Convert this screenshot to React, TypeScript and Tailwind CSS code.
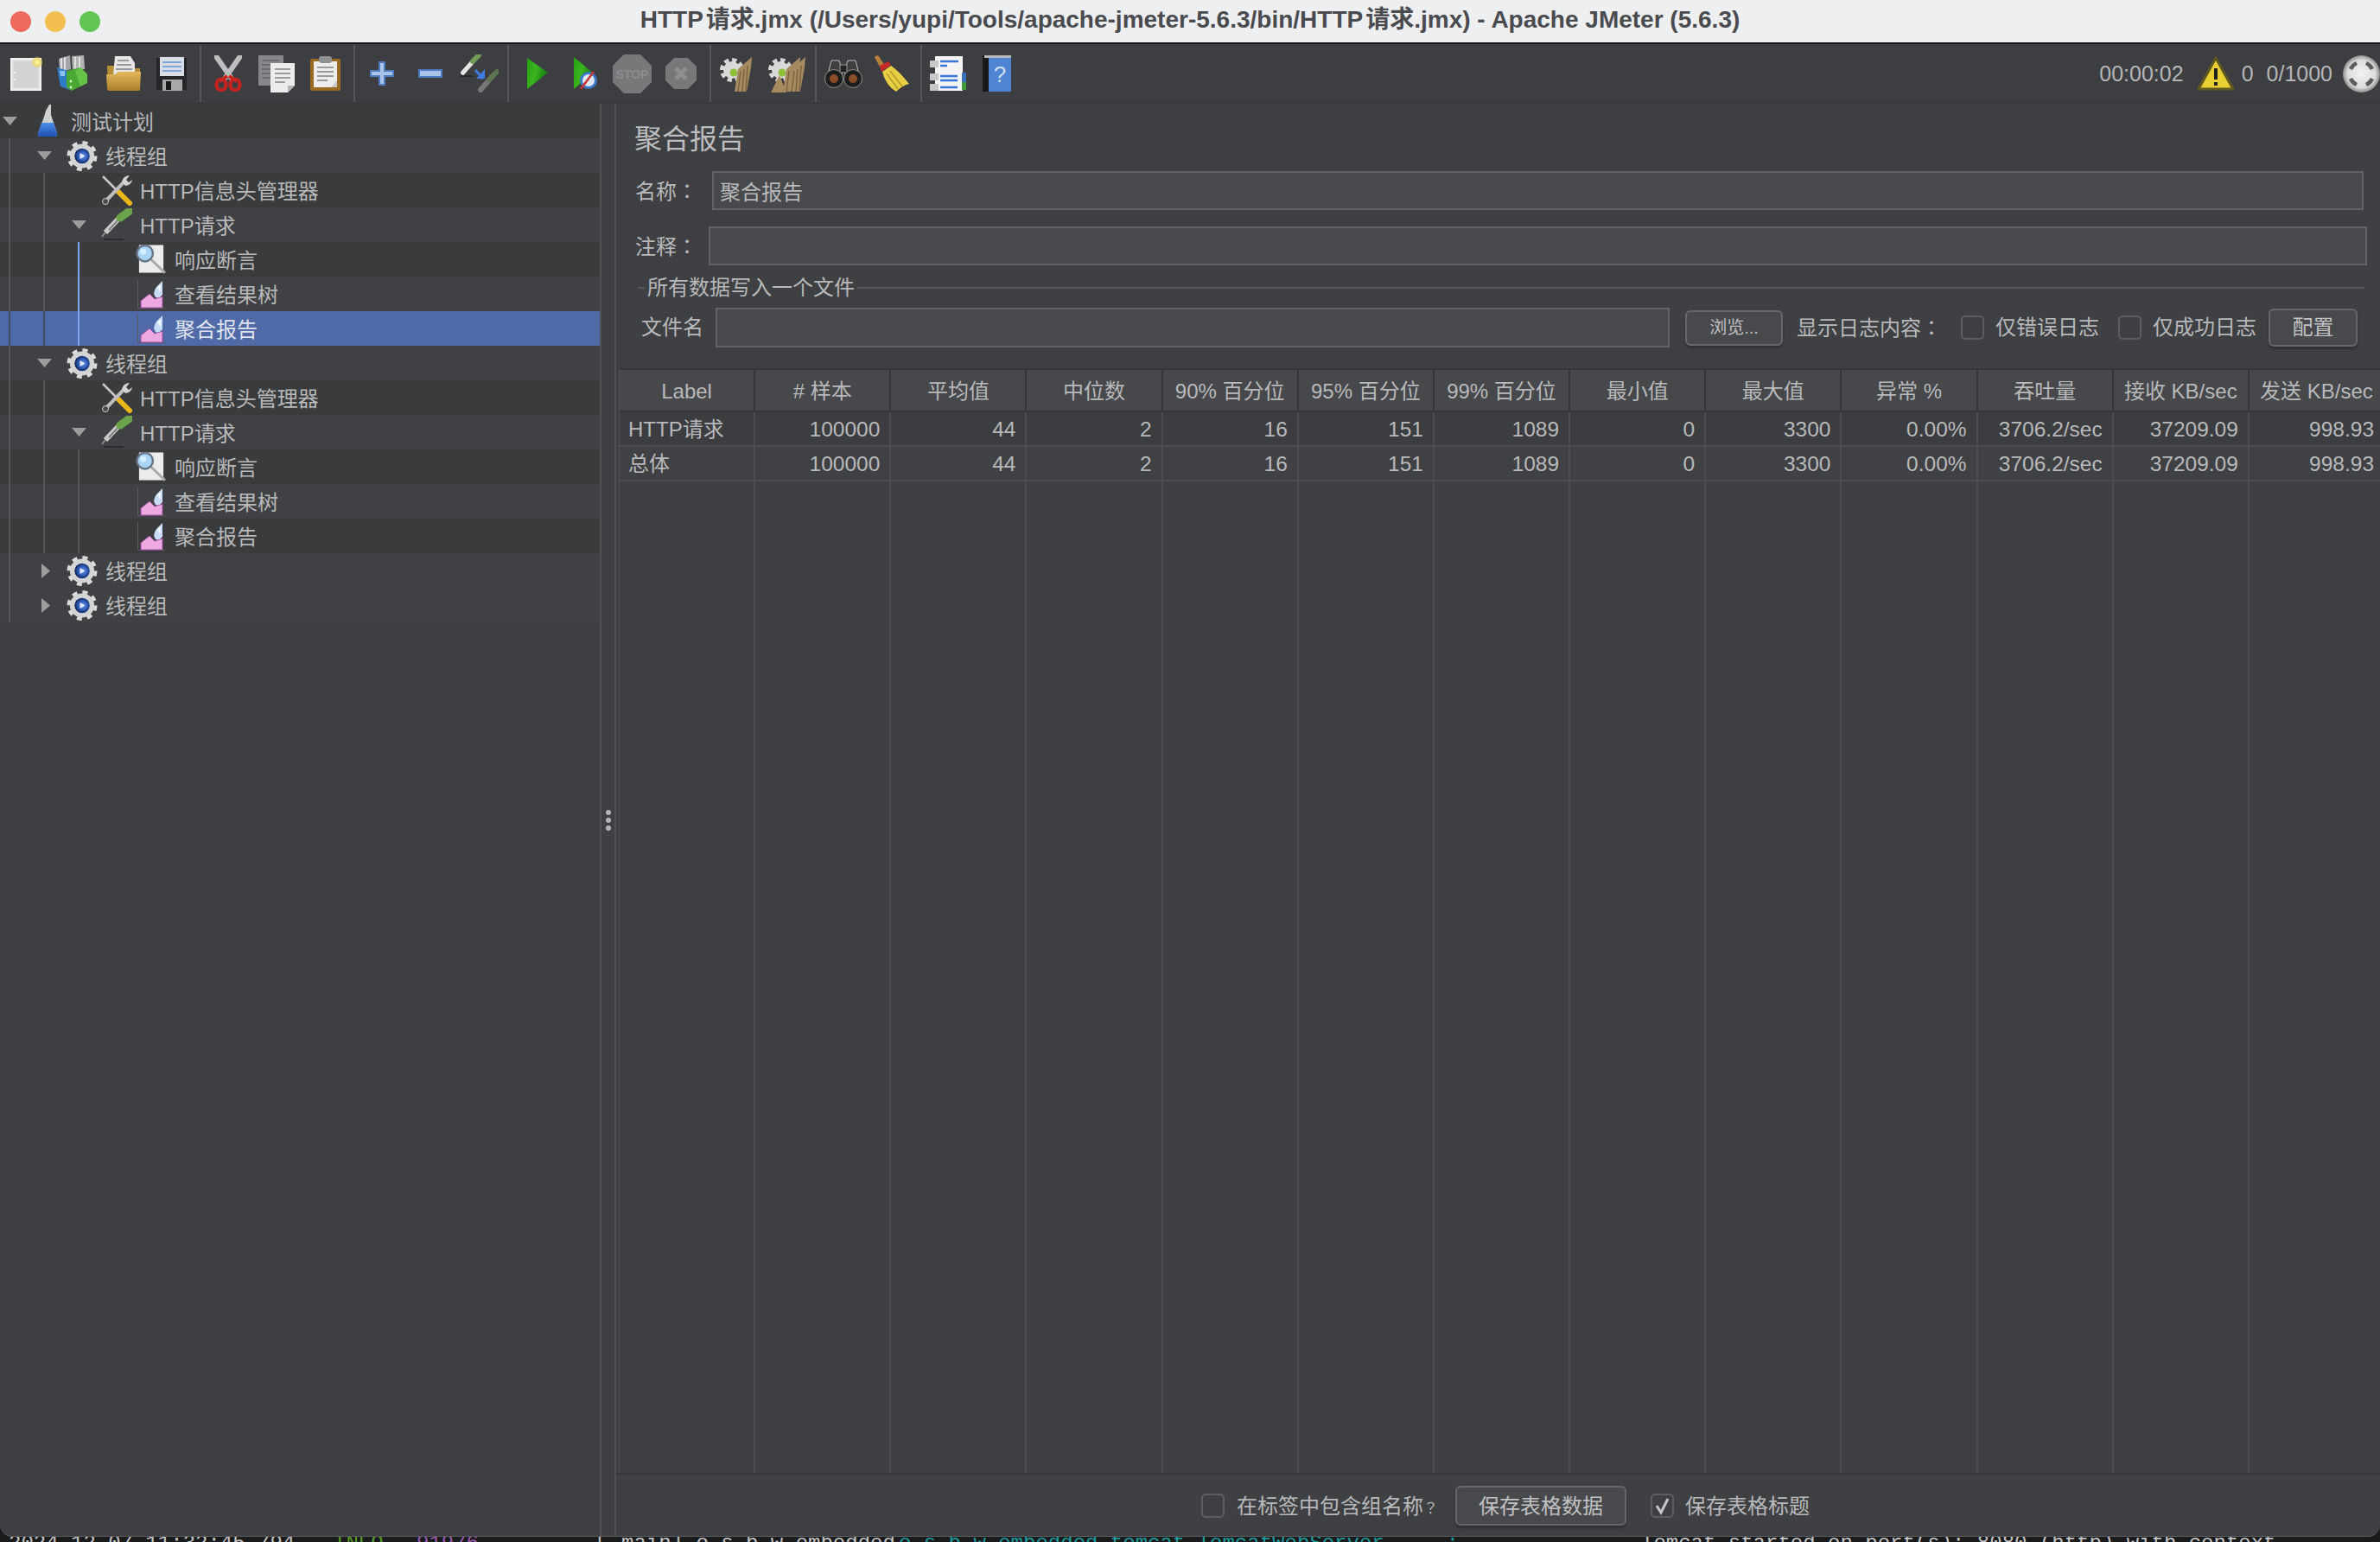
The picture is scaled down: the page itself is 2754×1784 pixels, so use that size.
import React from "react";

const Colon = ({ small }: { small?: boolean }) => (
  <span lang="zh-TW" className={`font-['Noto_Sans_CJK_TC',sans-serif] ${small ? "text-[17px]" : ""}`}>{small ? "？" : "："}</span>
);

/* ---------- toolbar icons ---------- */
const Sep = ({ c }: { c: string }) => <div className={`h-[66px] w-[2px] bg-[#56575a] ${c}`} />;

const NewIcon = ({ c }: { c: string }) => (
  <svg className={c} width="37" height="40" viewBox="0 0 37 40">
    <defs><radialGradient id="glow"><stop offset="0" stopColor="#fff7b0" /><stop offset="0.55" stopColor="#f0de70" /><stop offset="1" stopColor="#d8c85a" stopOpacity="0" /></radialGradient></defs>
    <rect x="1" y="3" width="34" height="36" fill="#dfdfdf" stroke="#f2f2f2" strokeWidth="2" />
    <rect x="4" y="6" width="28" height="30" fill="#d4d4d4" />
    <circle cx="31" cy="7" r="7" fill="url(#glow)" />
    <circle cx="5" cy="19" r="1" fill="#fff" /><circle cx="5" cy="27" r="1" fill="#fff" />
  </svg>
);
const TemplateIcon = ({ c }: { c: string }) => (
  <svg className={c} width="38" height="42" viewBox="0 0 38 42">
    <path d="M3 4 L16 0 L17 16 L4 20Z" fill="#a4a6a9" /><path d="M18 1 L32 0 L33 16 L19 17Z" fill="#b2b3b5" />
    <path d="M6 3v15M10 2v15M22 2v14M27 2v14" stroke="#e0e0e0" strokeWidth="2" />
    <path d="M1 14 L14 18 L16 40 L5 36Z" fill="#2f7cc6" />
    <path d="M4 18h6v6H5z" fill="#8cc3ee" />
    <path d="M12 18 L28 14 L36 22 L36 32 L18 41 L12 37Z" fill="#49a832" />
    <path d="M22 18 L28 14 L36 22 L36 32 L28 36Z" fill="#67c346" />
    <circle cx="17" cy="30" r="1.4" fill="#d8f5c8" /><circle cx="17" cy="37" r="1.4" fill="#d8f5c8" />
  </svg>
);
const OpenIcon = ({ c }: { c: string }) => (
  <svg className={c} width="40" height="42" viewBox="0 0 40 42">
    <defs><linearGradient id="fold" x1="0" y1="0" x2="0" y2="1"><stop offset="0" stopColor="#e5b95a" /><stop offset="1" stopColor="#a97f2c" /></linearGradient></defs>
    <path d="M1 12h8l2 3h28v24H2z" fill="#b78d36" />
    <path d="M10 1h18l5 8v14H8z" fill="#e6e6e6" />
    <path d="M13 6h13M12 11h17M11 16h19" stroke="#9a9a9a" strokeWidth="2" />
    <path d="M0 22h10l4-3h26l-1 21q0 1-2 1H3q-2 0-2-2z" fill="url(#fold)" />
  </svg>
);
const SaveIcon = ({ c }: { c: string }) => (
  <svg className={c} width="39" height="41" viewBox="0 0 39 41">
    <path d="M1 1h37v39H1z" fill="#25262a" stroke="#4a4b4f" />
    <rect x="6" y="1" width="28" height="22" fill="#d8dde6" />
    <path d="M9 7h22M9 12h22M9 17h22" stroke="#7ea6d8" strokeWidth="2" />
    <rect x="9" y="27" width="23" height="13" fill="#a8a8a8" />
    <rect x="13" y="29" width="6" height="10" fill="#18181a" />
  </svg>
);
const CutIcon = ({ c }: { c: string }) => (
  <svg className={c} width="32" height="42" viewBox="0 0 32 42">
    <path d="M2 1 L20 27 M30 1 L12 27" stroke="#bdbec0" strokeWidth="6" strokeLinecap="round" />
    <path d="M17 24 L26 30 M15 24 L6 30" stroke="#c62320" strokeWidth="4" />
    <ellipse cx="8" cy="34" rx="5.5" ry="6.5" fill="none" stroke="#c62320" strokeWidth="4" />
    <ellipse cx="24" cy="34" rx="5.5" ry="6.5" fill="none" stroke="#c62320" strokeWidth="4" />
  </svg>
);
const CopyIcon = ({ c }: { c: string }) => (
  <svg className={c} width="43" height="43" viewBox="0 0 43 43">
    <rect x="0" y="0" width="29" height="35" fill="#86878a" />
    <path d="M4 6h20M4 11h20M4 16h20M4 21h20M4 26h20" stroke="#6b6c6e" strokeWidth="2" />
    <path d="M14 9h28v26l-8 8H14z" fill="#ececec" />
    <path d="M34 43v-8h8z" fill="#b5b5b5" />
    <path d="M19 16h18M19 21h18M19 26h18M19 31h12" stroke="#9d9d9d" strokeWidth="2" />
  </svg>
);
const PasteIcon = ({ c }: { c: string }) => (
  <svg className={c} width="36" height="42" viewBox="0 0 36 42">
    <rect x="0" y="4" width="35" height="37" rx="2" fill="#9a6a20" />
    <rect x="4" y="7" width="27" height="30" fill="#ededed" />
    <path d="M24 37l7-8v8z" fill="#c8c8c8" />
    <rect x="10" y="1" width="15" height="8" rx="3" fill="#8f9092" />
    <path d="M8 14h19M8 19h19M8 24h19M8 29h12" stroke="#9a9a9a" strokeWidth="2" />
  </svg>
);
const PlusIcon = ({ c }: { c: string }) => (
  <svg className={c} width="28" height="28" viewBox="0 0 28 28">
    <path d="M11 1h6v10h10v6H17v10h-6V17H1v-6h10z" fill="#a9c3ea" stroke="#4f7cc0" strokeWidth="2" />
  </svg>
);
const MinusIcon = ({ c }: { c: string }) => (
  <svg className={c} width="28" height="10" viewBox="0 0 28 10"><rect x="1" y="1" width="26" height="8" fill="#a9c3ea" stroke="#4f7cc0" strokeWidth="2" /></svg>
);
const ToggleIcon = ({ c }: { c: string }) => (
  <svg className={c} width="44" height="44" viewBox="0 0 44 44">
    <path d="M1 23 L16 6" stroke="#e6e6e6" strokeWidth="5" />
    <path d="M14 8 L21 1" stroke="#6f9c55" strokeWidth="6" strokeLinecap="round" />
    <path d="M0 25h14" stroke="#26272a" strokeWidth="2" />
    <path d="M17 18 L26 28" stroke="#3f7be0" strokeWidth="3" fill="none" /><path d="M18 28h10V17z" fill="#3f7be0" />
    <path d="M23 41 L38 24" stroke="#777" strokeWidth="6" strokeLinecap="round" /><path d="M33 29 L42 20" stroke="#5e7350" strokeWidth="6" strokeLinecap="round" />
  </svg>
);
const PlayIcon = ({ c }: { c: string }) => (
  <svg className={c} width="25" height="36" viewBox="0 0 25 36">
    <defs><linearGradient id="pl" x1="0" y1="0" x2="1" y2="0.4"><stop offset="0" stopColor="#25a012" /><stop offset="0.5" stopColor="#3bb51f" /><stop offset="1" stopColor="#157c10" /></linearGradient></defs>
    <path d="M1 0 L25 17 L1 36Z" fill="url(#pl)" />
  </svg>
);
const PlayNoTimerIcon = ({ c }: { c: string }) => (
  <svg className={c} width="28" height="38" viewBox="0 0 28 38">
    <path d="M1 0 L23 18 L1 37Z" fill="url(#pl)" />
    <circle cx="18" cy="27" r="8.5" fill="#dfe8f5" stroke="#3c78c8" strokeWidth="3" />
    <path d="M9 37 L24 17" stroke="#c83232" strokeWidth="2.5" />
  </svg>
);
const StopIcon = ({ c }: { c: string }) => (
  <svg className={c} width="45" height="45" viewBox="0 0 45 45">
    <path d="M13 0h19l13 13v19L32 45H13L0 32V13z" fill="#77787a" />
    <text x="22.5" y="28" textAnchor="middle" fontSize="14" fontWeight="700" fontFamily="Liberation Sans" fill="#8b8c8e">STOP</text>
  </svg>
);
const ShutIcon = ({ c }: { c: string }) => (
  <svg className={c} width="36" height="36" viewBox="0 0 36 36">
    <path d="M10 0h16l10 10v16L26 36H10L0 26V10z" fill="#77787a" />
    <path d="M12 12l12 12M24 12L12 24" stroke="#8e8f91" strokeWidth="5" />
  </svg>
);
const Broom = () => (
  <>
    <path d="M18 40 L22 14 L38 0 L37 12 L32 40Z" fill="#a68a60" />
    <path d="M22 40 L25 16M27 40 L29 14M31 40L33 10" stroke="#7c6440" strokeWidth="1.5" />
  </>
);
const ClearIcon = ({ c, all }: { c: string; all?: boolean }) => (
  <svg className={c} width={all ? 44 : 40} height="44" viewBox={all ? "0 0 44 44" : "0 0 40 44"}>
    <circle cx="15" cy="18" r="11" fill="none" stroke="#d6d6d6" strokeWidth="6" strokeDasharray="5 3.6" />
    <circle cx="15" cy="18" r="10" fill="#d9d9d9" />
    <circle cx="17" cy="21" r="4.5" fill="#8ec13a" />
    <g transform="translate(0 3)"><Broom /></g>
    {all && <g transform="translate(6 3)"><Broom /></g>}
    {all && <path d="M4 44 L14 24 L22 44Z" fill="#a68a60" />}
  </svg>
);
const BinocIcon = ({ c }: { c: string }) => (
  <svg className={c} width="44" height="36" viewBox="0 0 44 36">
    <path d="M8 3h9l3 10v6H4z M27 3h9l4 16H24v-6z" fill="#3e3e40" stroke="#bbb" strokeWidth="1" />
    <rect x="18" y="8" width="8" height="9" fill="#222" stroke="#999" />
    <circle cx="11" cy="24" r="10.5" fill="#1d1d1e" stroke="#8e8e8e" />
    <circle cx="33" cy="24" r="10.5" fill="#1d1d1e" stroke="#8e8e8e" />
    <circle cx="11" cy="24" r="5" fill="#8a4d25" /><circle cx="33" cy="24" r="5" fill="#8a4d25" />
  </svg>
);
const BroomIcon = ({ c }: { c: string }) => (
  <svg className={c} width="44" height="44" viewBox="0 0 44 44">
    <path d="M3 3 Q5 0 8 2 L15 13 L10 16Z" fill="#b5803c" />
    <path d="M9 13 L19 8 L22 12 L11 20Z" fill="#c8282a" />
    <path d="M12 20 L22 13 Q32 20 43 34 Q35 36 28 43 Q16 36 12 20Z" fill="#e6cf45" />
    <path d="M17 22 L30 40M21 19 L35 37" stroke="#b59a28" strokeWidth="1.5" />
  </svg>
);
const FuncIcon = ({ c }: { c: string }) => (
  <svg className={c} width="43" height="42" viewBox="0 0 43 42">
    <rect x="6" y="1" width="32" height="40" fill="#f4f4f4" />
    <rect x="37" y="20" width="5" height="11" fill="#3a6fc0" /><rect x="37" y="31" width="5" height="9" fill="#3f9a3a" />
    <path d="M12 7h21M12 12h8M12 24h20M12 29h20M12 37h20" stroke="#3a76d8" strokeWidth="2.5" />
    <rect x="0" y="6" width="10" height="8" fill="#c8c8c8" /><rect x="0" y="21" width="10" height="8" fill="#c8c8c8" /><rect x="0" y="33" width="10" height="8" fill="#c8c8c8" />
  </svg>
);
const HelpIcon = ({ c }: { c: string }) => (
  <svg className={c} width="34" height="42" viewBox="0 0 34 42">
    <rect x="0" y="0" width="33" height="42" fill="#17181a" />
    <rect x="7" y="3" width="26" height="39" fill="#4f84d2" />
    <rect x="2" y="0" width="31" height="3" fill="#b8b8b8" />
    <text x="20" y="31" textAnchor="middle" fontSize="26" fontFamily="Liberation Sans" fill="#cfe0f7">?</text>
  </svg>
);
const WarnIcon = ({ c }: { c: string }) => (
  <svg className={c} width="44" height="40" viewBox="0 0 44 40">
    <path d="M22 2 L42 38 H2Z" fill="#e9cf32" stroke="#5f5820" strokeWidth="3" strokeLinejoin="round" />
    <rect x="20" y="14" width="4" height="13" fill="#222" /><rect x="20" y="30" width="4" height="4" fill="#222" />
  </svg>
);
const HeapIcon = ({ c }: { c: string }) => (
  <svg className={c} width="43" height="43" viewBox="0 0 43 43">
    <defs><radialGradient id="hp"><stop offset="0" stopColor="#f2f2f2" /><stop offset="0.75" stopColor="#dcdcdc" /><stop offset="1" stopColor="#8d8d8d" /></radialGradient></defs>
    <circle cx="21.5" cy="21.5" r="21.5" fill="url(#hp)" />
    <g fill="none" stroke="#5c5c5e" strokeWidth="4.5">
      <path d="M9 16 A13.5 13.5 0 0 1 16 9" /><path d="M27 9 A13.5 13.5 0 0 1 34 16" />
      <path d="M34 27 A13.5 13.5 0 0 1 27 34" /><path d="M16 34 A13.5 13.5 0 0 1 9 27" />
    </g>
  </svg>
);

/* ---------- tree icons ---------- */
const Flask = () => (
  <svg width="24" height="38" viewBox="0 0 24 38">
    <defs><linearGradient id="fl" x1="0" y1="0" x2="0" y2="1"><stop offset="0" stopColor="#4f8ee8" /><stop offset="1" stopColor="#1c4fb2" /></linearGradient></defs>
    <path d="M10 7 L14 0 L16 0 L16 12 L23 33 Q24 37 20 37 H4 Q0 37 1 33 L8 14Z" fill="#cfd0d2" />
    <path d="M5 21 H19 L23 33 Q24 37 20 37 H4 Q0 37 1 33Z" fill="url(#fl)" />
  </svg>
);
const Gear = () => (
  <svg width="37" height="37" viewBox="0 0 37 37">
    <defs><radialGradient id="gr" cx="0.55" cy="0.5"><stop offset="0" stopColor="#6f9ff0" /><stop offset="0.65" stopColor="#2a55b0" /><stop offset="1" stopColor="#172b60" /></radialGradient></defs>
    <circle cx="18.5" cy="18.5" r="15.5" fill="none" stroke="#dcdcdc" strokeWidth="5" strokeDasharray="6 6.17" />
    <circle cx="18.5" cy="18.5" r="14.5" fill="#d4d4d4" />
    <circle cx="18.5" cy="18.5" r="9" fill="url(#gr)" />
    <path d="M16 15 L22 18.5 L16 22Z" fill="#e4ecfa" />
  </svg>
);
const Wrench = () => (
  <svg width="36" height="36" viewBox="0 0 36 36">
    <path d="M2 2 L20 20" stroke="#c9c9c9" strokeWidth="2.5" />
    <path d="M20 20 L33 33" stroke="#e9b61a" strokeWidth="6" strokeLinecap="round" />
    <path d="M26 9 L5 31" stroke="#bcbcbc" strokeWidth="4" />
    <circle cx="5" cy="31" r="3.5" fill="#4a4a4c" stroke="#ccc" />
    <path d="M24 8 Q26 1 33 1 L29 6 L32 9 L36 6 Q35 12 28 13Z" fill="#d2d2d2" />
  </svg>
);
const Pipette = () => (
  <svg width="36" height="38" viewBox="0 0 36 38">
    <path d="M1 33 L7 25" stroke="#8c8c8c" strokeWidth="2" />
    <path d="M5 28 L22 10" stroke="#c9c9c9" strokeWidth="6" />
    <path d="M9 25 L21 12" stroke="#6c6c6e" strokeWidth="1.5" />
    <path d="M22 11 L33 3" stroke="#6aa349" strokeWidth="9" strokeLinecap="round" />
    <path d="M3 36 H26" stroke="#2b2c2e" strokeWidth="2" />
  </svg>
);
const Assertion = () => (
  <svg width="37" height="36" viewBox="0 0 37 36">
    <rect x="4" y="1" width="29" height="33" fill="#ececec" />
    <path d="M17 17 L35 34" stroke="#a9a9a9" strokeWidth="3" />
    <circle cx="11" cy="11" r="9.5" fill="#a9d6f4" stroke="#69768a" strokeWidth="2.5" />
    <circle cx="9" cy="9" r="3.5" fill="#d8effc" />
  </svg>
);
const Graph = () => (
  <svg width="33" height="33" viewBox="0 0 33 33">
    <path d="M0.5 0V32.5H32" stroke="#5a5b5e" strokeWidth="1" fill="none" />
    <path d="M4 32 V24 L14 16 L20 22 L29 19 V32Z" fill="#eda9e0" stroke="#a04aa0" strokeWidth="1" />
    <path d="M21 20 Q17 15 22 8 L29 1 V17 Q25 22 21 20Z" fill="#c7dcf6" />
    <path d="M23 9 L27 5 V14Z" fill="#f4f8fd" />
  </svg>
);

/* ---------- tree ---------- */
type Row = { level: number; icon: React.ReactNode; text: string; arrow?: "down" | "right"; g: number; blue?: boolean; sel?: boolean };
const hdr = { icon: <Wrench />, text: "HTTP信息头管理器" };
const req = { icon: <Pipette />, text: "HTTP请求", arrow: "down" as const };
const ass = { icon: <Assertion />, text: "响应断言" };
const vrt = { icon: <Graph />, text: "查看结果树" };
const agg = { icon: <Graph />, text: "聚合报告" };
const tg = { icon: <Gear />, text: "线程组" };
const rows: Row[] = [
  { level: 0, icon: <Flask />, text: "测试计划", arrow: "down", g: 0 },
  { level: 1, ...tg, arrow: "down", g: 1 },
  { level: 2, ...hdr, g: 2 },
  { level: 2, ...req, g: 2 },
  { level: 3, ...ass, g: 3, blue: true },
  { level: 3, ...vrt, g: 3, blue: true },
  { level: 3, ...agg, g: 3, blue: true, sel: true },
  { level: 1, ...tg, arrow: "down", g: 1 },
  { level: 2, ...hdr, g: 2 },
  { level: 2, ...req, g: 2 },
  { level: 3, ...ass, g: 3 },
  { level: 3, ...vrt, g: 3 },
  { level: 3, ...agg, g: 3 },
  { level: 1, ...tg, arrow: "right", g: 1 },
  { level: 1, ...tg, arrow: "right", g: 1 },
];
const levelPad = ["pl-0", "pl-[40px]", "pl-[80px]", "pl-[120px]"];

const TreeRow = ({ r, i }: { r: Row; i: number }) => {
  const bg = r.sel ? "bg-[#4f6aa7]" : i % 2 === 0 && i !== 14 ? "bg-[#3a3b3d]" : "bg-[#404144]";
  const line = r.sel ? "bg-[#3f4a66]" : "bg-[#55565a]";
  return (
    <div className={`relative flex h-[40px] items-center ${bg} ${levelPad[r.level]}`}>
      {r.g >= 1 && <span className={`absolute left-[10px] top-0 h-full w-[2px] ${line}`} />}
      {r.g >= 2 && <span className={`absolute left-[50px] top-0 h-full w-[2px] ${line}`} />}
      {r.g >= 3 && <span className={`absolute left-[90px] top-0 h-full w-[2px] ${r.blue ? "bg-[#7ea6ee]" : line}`} />}
      <div className="flex w-[37px] shrink-0 items-center pl-[3px]">
        {r.arrow === "down" && (
          <svg width="17" height="10" viewBox="0 0 17 10"><path d="M0 0H17L8.5 10Z" fill="#9c9d9f" /></svg>
        )}
        {r.arrow === "right" && (
          <svg width="17" height="17" viewBox="0 0 17 17"><path d="M5 0 L15 8.5 L5 17Z" fill="#9c9d9f" /></svg>
        )}
      </div>
      <div className="flex h-[36px] w-[36px] shrink-0 items-center justify-center">{r.icon}</div>
      <span className={`ml-[9px] pt-[3px] text-[24px] leading-none ${r.sel ? "text-[#dfe3ee]" : "text-[#b8b9bb]"}`}>{r.text}</span>
    </div>
  );
};

/* ---------- form bits ---------- */
const Field = ({ c, value }: { c: string; value?: string }) => (
  <input
    readOnly
    value={value ?? ""}
    className={`h-[46px] border-2 border-[#626366] bg-[#48494c] px-[7px] text-[24px] text-[#b8b9bb] outline-none ${c}`}
  />
);
const Check = ({ c, on }: { c: string; on?: boolean }) => (
  <span className={`flex h-[28px] w-[27px] shrink-0 items-center justify-center rounded-[5px] border-2 border-[#5c5d60] bg-[#3e3f42] ${c}`}>
    {on && (
      <svg width="19" height="22" viewBox="0 0 19 22"><path d="M3 11 L8 19 L16 3" stroke="#c4c5c7" strokeWidth="3" fill="none" /></svg>
    )}
  </span>
);
const Btn = ({ c, children }: { c: string; children: React.ReactNode }) => (
  <button className={`flex items-center justify-center rounded-[6px] border-2 border-[#66676a] bg-[#48494c] text-[#c0c1c3] shadow-[0_3px_3px_rgba(0,0,0,0.25)] ${c}`}>
    {children}
  </button>
);

/* ---------- table ---------- */
const cols = [
  ["Label", "HTTP请求", "总体"],
  ["# 样本", "100000", "100000"],
  ["平均值", "44", "44"],
  ["中位数", "2", "2"],
  ["90% 百分位", "16", "16"],
  ["95% 百分位", "151", "151"],
  ["99% 百分位", "1089", "1089"],
  ["最小值", "0", "0"],
  ["最大值", "3300", "3300"],
  ["异常 %", "0.00%", "0.00%"],
  ["吞吐量", "3706.2/sec", "3706.2/sec"],
  ["接收 KB/sec", "37209.09", "37209.09"],
  ["发送 KB/sec", "998.93", "998.93"],
];

export default function App() {
  return (
    <div className="flex h-[1784px] w-[2754px] flex-col overflow-hidden bg-[#1a1b1d] font-['Liberation_Sans','Noto_Sans_CJK_SC',sans-serif]">
      <div className="flex h-[1778px] shrink-0 flex-col overflow-hidden rounded-b-[14px] border-b border-[#5a5b5e] bg-[#3f4043]">
        {/* title bar */}
        <div className="flex h-[51px] shrink-0 items-center border-b-2 border-[#161719] bg-[#eeeff1]">
          <div className="flex w-[120px] items-center gap-[16px] pl-[12px]">
            <span className="h-[24px] w-[24px] shrink-0 rounded-full bg-[#ee6a5f]" />
            <span className="h-[24px] w-[24px] shrink-0 rounded-full bg-[#f5bf4f]" />
            <span className="h-[24px] w-[24px] shrink-0 rounded-full bg-[#61c554]" />
          </div>
          <div className="flex-1 pb-[4px] text-center text-[28px] font-bold leading-none text-[#4a4b4f]">
            HTTP<span className="ml-[3px]">请求</span>.jmx (/Users/yupi/Tools/apache-jmeter-5.6.3/bin/HTTP<span className="ml-[3px]">请求</span>.jmx) - Apache JMeter (5.6.3)
          </div>
          <div className="w-[120px]" />
        </div>

        {/* toolbar */}
        <div className="flex h-[69px] shrink-0 items-center border-b border-[#37383a] bg-[#3d3e41]">
          <NewIcon c="ml-[12px]" />
          <TemplateIcon c="ml-[16px]" />
          <OpenIcon c="ml-[20px]" />
          <SaveIcon c="ml-[16px]" />
          <Sep c="ml-[13px]" />
          <CutIcon c="ml-[15px]" />
          <CopyIcon c="ml-[19px]" />
          <PasteIcon c="ml-[17px]" />
          <Sep c="ml-[14px]" />
          <PlusIcon c="ml-[17px]" />
          <MinusIcon c="ml-[28px]" />
          <ToggleIcon c="ml-[21px]" />
          <Sep c="ml-[10px]" />
          <PlayIcon c="ml-[20px]" />
          <PlayNoTimerIcon c="ml-[29px]" />
          <StopIcon c="ml-[18px]" />
          <ShutIcon c="ml-[16px]" />
          <Sep c="ml-[15px]" />
          <ClearIcon c="ml-[9px]" />
          <ClearIcon c="ml-[16px]" all />
          <Sep c="ml-[11px]" />
          <BinocIcon c="ml-[9px]" />
          <BroomIcon c="ml-[11px]" />
          <Sep c="ml-[12px]" />
          <FuncIcon c="ml-[9px]" />
          <HelpIcon c="ml-[18px]" />
          <div className="ml-auto flex items-center text-[25px] leading-none text-[#b5b6b8]">
            <span>00:00:02</span>
            <WarnIcon c="ml-[15px]" />
            <span className="ml-[8px]">0</span>
            <span className="ml-[15px]">0/1000</span>
            <HeapIcon c="ml-[12px]" />
          </div>
        </div>

        {/* main */}
        <div className="flex min-h-0 flex-1">
          {/* tree */}
          <div className="w-[694px] shrink-0">
            {rows.map((r, i) => (
              <TreeRow key={i} r={r} i={i} />
            ))}
          </div>
          {/* splitter */}
          <div className="flex w-[19px] shrink-0 flex-col items-center justify-center gap-[3px] border-x-2 border-[#505154]">
            <span className="h-[6px] w-[6px] rounded-full bg-[#b5b6b8]" />
            <span className="h-[6px] w-[6px] rounded-full bg-[#b5b6b8]" />
            <span className="h-[6px] w-[6px] rounded-full bg-[#b5b6b8]" />
          </div>

          {/* right panel */}
          <div className="flex min-w-0 flex-1 flex-col text-[24px] text-[#b8b9bb]">
            <div className="flex h-[78px] shrink-0 items-center pl-[21px] pt-[3px] text-[32px] leading-none text-[#bcbdbf]">聚合报告</div>
            <div className="flex h-[45px] shrink-0 items-center">
              <span className="w-[111px] shrink-0 pl-[22px]">名称<Colon /></span>
              <Field c="w-[1911px] !h-[45px]" value="聚合报告" />
            </div>
            <div className="mt-[19px] flex h-[45px] shrink-0 items-center">
              <span className="w-[107px] shrink-0 pl-[22px]">注释<Colon /></span>
              <Field c="w-[1919px] !h-[45px]" />
            </div>
            <div className="ml-[25px] mt-[14px] flex h-[24px] w-[1998px] shrink-0 items-center">
              <span className="h-[2px] w-[8px] bg-[#55565a]" />
              <span className="ml-[3px] leading-none">所有数据写入一个文件</span>
              <span className="ml-[3px] h-[2px] flex-1 bg-[#55565a]" />
            </div>
            <div className="mt-[11px] flex h-[46px] shrink-0 items-center">
              <span className="ml-[29px] w-[86px] shrink-0 leading-none">文件名</span>
              <Field c="w-[1104px]" />
              <Btn c="ml-[18px] h-[41px] w-[113px] text-[20px]">浏览...</Btn>
              <span className="ml-[16px] w-[172px] shrink-0 leading-none">显示日志内容<Colon /></span>
              <Check c="ml-[18px]" />
              <span className="ml-[13px] w-[120px] shrink-0 whitespace-nowrap leading-none">仅错误日志</span>
              <Check c="ml-[22px]" />
              <span className="ml-[13px] w-[120px] shrink-0 whitespace-nowrap leading-none">仅成功日志</span>
              <Btn c="ml-[14px] h-[44px] w-[103px] text-[24px]">配置</Btn>
            </div>

            {/* table */}
            <div className="ml-[3px] mt-[24px] flex min-h-0 flex-1 overflow-hidden border-l border-[#505154]">
              {cols.map((col, i) => (
                <div key={i} className="flex w-[157.17px] shrink-0 flex-col">
                  <div className="flex h-[51px] shrink-0 items-center justify-center whitespace-nowrap border-y-2 border-r-2 border-[#36373a] bg-[#47484b] pt-[2px] leading-none text-[#b8b9bb]">
                    {col[0]}
                  </div>
                  <div className="flex min-h-0 flex-1 flex-col border-r-2 border-[#4c4d50]">
                    <div className={`flex h-[40px] shrink-0 items-center border-b-2 border-[#4c4d50] bg-[#3c3d40] pt-[2px] text-[24.5px] leading-none ${i === 0 ? "justify-start pl-[10px] text-[24px]" : "justify-end pr-[11px]"}`}>
                      {col[1]}
                    </div>
                    <div className={`flex h-[40px] shrink-0 items-center border-b-2 border-[#4c4d50] bg-[#404144] pt-[2px] text-[24.5px] leading-none ${i === 0 ? "justify-start pl-[10px] text-[24px]" : "justify-end pr-[11px]"}`}>
                      {col[2]}
                    </div>
                  </div>
                </div>
              ))}
            </div>

            {/* bottom bar */}
            <div className="flex h-[73px] shrink-0 items-center border-t-2 border-[#37383a] pl-[677px]">
              <Check c="" />
              <span className="ml-[14px] whitespace-nowrap pt-[2px] leading-none">在标签中包含组名称<Colon small /></span>
              <Btn c="ml-[20px] h-[46px] w-[198px] pt-[2px] text-[24px]">保存表格数据</Btn>
              <Check c="ml-[28px]" on />
              <span className="ml-[13px] whitespace-nowrap pt-[2px] leading-none">保存表格标题</span>
            </div>
          </div>
        </div>
      </div>

      {/* terminal behind the window, only the tops of its letters show */}
      <div className="flex h-[6px] shrink-0 overflow-hidden whitespace-pre font-['Liberation_Mono',monospace] text-[24px] leading-[16px] text-[#c4c4c4]">
        <span className="ml-[10px] w-[376px] shrink-0">2024-12-07 11:32:45.794</span>
        <span className="w-[96px] shrink-0 text-[#5a9a2a]">INFO</span>
        <span className="w-[121px] shrink-0 text-[#9a5ab0]">91976</span>
        <span className="w-[85px] shrink-0">---</span>
        <span className="w-[31px] shrink-0">[</span>
        <span className="w-[321px] shrink-0">main] o.s.b.w.embedded</span>
        <span className="w-[859px] shrink-0 text-[#1f9a9a]">o.s.b.w.embedded.tomcat.TomcatWebServer     :</span>
        <span className="shrink-0">Tomcat started on port(s): 8080 (http) with context</span>
      </div>
    </div>
  );
}
